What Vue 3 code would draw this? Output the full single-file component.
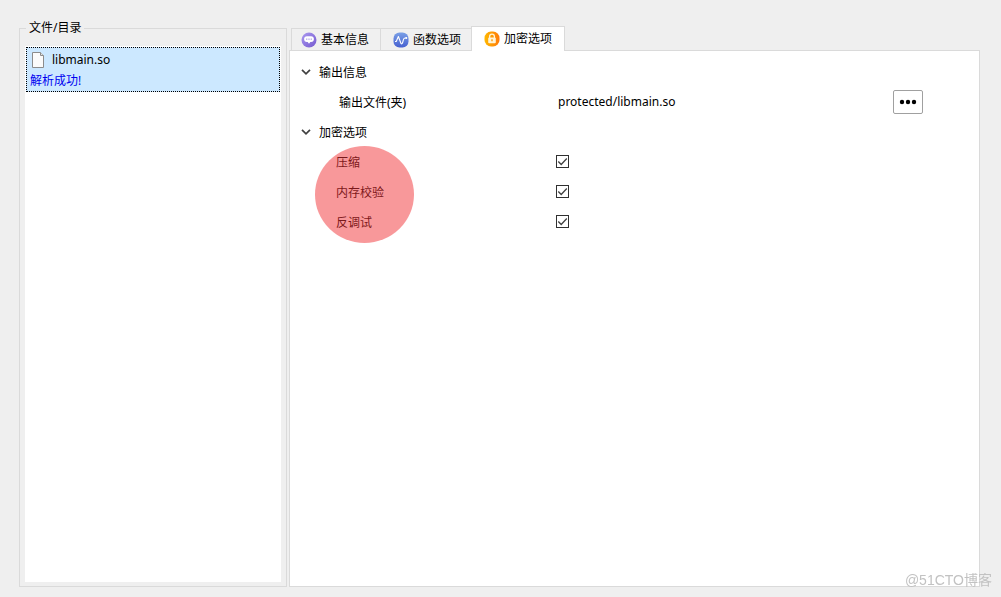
<script setup>
import { ref, reactive } from 'vue'

const activeTab = ref('encrypt')
const tabs = [
  { id: 'basic', label: '基本信息' },
  { id: 'function', label: '函数选项' },
  { id: 'encrypt', label: '加密选项' },
]
const outputFile = ref('protected/libmain.so')
const options = reactive([
  { id: 'compress', label: '压缩', checked: true },
  { id: 'memory', label: '内存校验', checked: true },
  { id: 'debug', label: '反调试', checked: true },
])
</script>

<template>
  <main class="window">
    <fieldset class="files">
      <legend>文件/目录</legend>
      <ul class="file-list">
        <li class="file">
          <div class="file-name">
            <svg class="file-icon" viewBox="0 0 14 18" aria-hidden="true">
              <path d="M1.5 1.5h8l3 3v12h-11z" fill="#fbfbfb" stroke="#8c8c8c" />
              <path d="M9.5 1.5v3h3" fill="#e4e4e4" stroke="#8c8c8c" />
            </svg>
            <span>libmain.so</span>
          </div>
          <div class="file-status">解析成功!</div>
        </li>
      </ul>
    </fieldset>

    <section class="settings">
      <div class="tabs" role="tablist">
        <button
          v-for="tab in tabs"
          :key="tab.id"
          type="button"
          role="tab"
          class="tab"
          :class="{ active: activeTab === tab.id }"
          :aria-selected="activeTab === tab.id"
          @click="activeTab = tab.id"
        >
          <svg v-if="tab.id === 'basic'" class="tab-icon" viewBox="0 0 16 16" aria-hidden="true">
            <defs>
              <linearGradient id="violet" x1="0" y1="0" x2="1" y2="1">
                <stop offset="0" stop-color="#ab9af0" />
                <stop offset="1" stop-color="#7458cf" />
              </linearGradient>
            </defs>
            <circle cx="8" cy="8" r="7.5" fill="url(#violet)" />
            <path d="M6 4.200h4a2.600 2.600 0 0 1 0 5.800H9.300L8 11.800 6.700 10H6a2.600 2.600 0 0 1 0-5.800z" fill="#fff" />
            <circle cx="5.800" cy="7.100" r=".6" fill="#8169d8" />
            <circle cx="8" cy="7.100" r=".6" fill="#8169d8" />
            <circle cx="10.200" cy="7.100" r=".6" fill="#8169d8" />
          </svg>
          <svg v-else-if="tab.id === 'function'" class="tab-icon" viewBox="0 0 16 16" aria-hidden="true">
            <defs>
              <linearGradient id="blue" x1="0" y1="0" x2="0" y2="1">
                <stop offset="0" stop-color="#7ba0e6" />
                <stop offset="1" stop-color="#4660d0" />
              </linearGradient>
            </defs>
            <rect x=".5" y=".5" width="15" height="15" rx="6" fill="url(#blue)" />
            <path
              d="M2 9.500h1.200L5.400 4.500 8 11.500c1 1.200 1.800-1 2.200-3.200.4-1.800 1-2.300 1.800-2.300h1.500"
              fill="none"
              stroke="#fff"
              stroke-width="1.100"
              stroke-linejoin="round"
            />
            <circle cx="13.300" cy="6" r="1" fill="#fff" />
          </svg>
          <svg v-else class="tab-icon" viewBox="0 0 16 16" aria-hidden="true">
            <defs>
              <linearGradient id="amber" x1="0" y1="0" x2="1" y2="0">
                <stop offset="0" stop-color="#ffb800" />
                <stop offset="1" stop-color="#ff7a08" />
              </linearGradient>
            </defs>
            <rect x=".5" y=".5" width="15" height="15" rx="6.500" fill="url(#amber)" />
            <path d="M5.600 7V5.500a2.400 2.400 0 0 1 4.800 0V7" fill="none" stroke="#fff4d8" stroke-width="1.300" />
            <rect x="4.200" y="6.500" width="7.600" height="5.800" rx="1" fill="#fff4d8" />
            <path d="M8 8.300v2" stroke="#ff9a08" stroke-width="1.400" />
          </svg>
          <span>{{ tab.label }}</span>
        </button>
      </div>

      <div class="panel" role="tabpanel">
        <h2 class="group">
          <svg class="chevron" viewBox="0 0 10 6" aria-hidden="true">
            <path d="M1 .8l4 4 4-4" fill="none" stroke="#404040" stroke-width="1.700" />
          </svg>
          <span class="text">输出信息</span>
        </h2>
        <div class="row output">
          <span class="name text">输出文件(夹)</span>
          <span class="value">{{ outputFile }}</span>
          <button type="button" class="browse" aria-label="浏览">
            <svg viewBox="0 0 18 6" aria-hidden="true">
              <circle cx="3" cy="3" r="2.200" />
              <circle cx="9" cy="3" r="2.200" />
              <circle cx="15" cy="3" r="2.200" />
            </svg>
          </button>
        </div>
        <h2 class="group">
          <svg class="chevron" viewBox="0 0 10 6" aria-hidden="true">
            <path d="M1 .8l4 4 4-4" fill="none" stroke="#404040" stroke-width="1.700" />
          </svg>
          <span class="text">加密选项</span>
        </h2>
        <div class="options">
          <div v-for="option in options" :key="option.id" class="row">
            <label class="name text" :for="option.id">{{ option.label }}</label>
            <span class="check">
              <input :id="option.id" v-model="option.checked" type="checkbox" />
              <svg v-if="option.checked" viewBox="0 0 13 13" aria-hidden="true">
                <path d="M2.300 6.500l2.900 3 5.600-6" fill="none" stroke="#404040" stroke-width="1.300" />
              </svg>
            </span>
          </div>
          <div class="highlight"></div>
        </div>
      </div>
    </section>
    <div class="watermark">@51CTO博客</div>
  </main>
</template>

<style>
body {
  margin: 0;
  background: #efefef;
}
</style>

<style scoped>
.window {
  box-sizing: border-box;
  min-height: 100vh;
  padding: 20px 21px 10px 19px;
  display: grid;
  grid-template-columns: 268px minmax(0, 1fr);
  gap: 2px;
  background: #efefef;
  color: #000;
  font: 12px/16px "Noto Sans", "Noto Sans CJK SC", sans-serif;
}
.files {
  display: flex;
  min-width: 0;
  margin: 0;
  padding: 10px 5px 4px;
  border: 1px solid #dadada;
}
legend {
  margin-left: 1px;
  padding: 0 3px;
}
.file-list {
  flex: 1;
  margin: 0;
  padding: 1px;
  list-style: none;
  background: #fff;
}
.file {
  padding: 2px 3px;
  border: 1px dotted #000;
  background: #cce8ff;
}
.file-name {
  display: flex;
  align-items: center;
  gap: 7px;
  height: 20px;
}
.file-icon {
  width: 14px;
  height: 18px;
  margin-left: 1px;
}
.file-status {
  height: 19px;
  line-height: 22px;
  color: #0000f0;
}
.settings {
  display: flex;
  flex-direction: column;
  padding-top: 6px;
}
.tabs {
  display: flex;
  align-items: flex-end;
  padding-left: 2px;
}
.tab {
  display: flex;
  align-items: center;
  gap: 4px;
  height: 22px;
  padding: 0 10px 0 12px;
  border: 1px solid #dadada;
  border-width: 1px 1px 0 0;
  background: #f0f0f0;
  color: inherit;
  font: inherit;
}
.tab:first-child {
  padding: 0 11px 0 9px;
  border-left-width: 1px;
}
.tab.active {
  z-index: 1;
  height: 25px;
  margin: 0 0 -1px -1px;
  padding: 0 12px;
  border-left-width: 1px;
  background: #fff;
}
.tab-icon {
  width: 16px;
  height: 16px;
}
.panel {
  flex: 1;
  padding: 6px 56px 6px 0;
  border: 1px solid #dadada;
  background: #fff;
}
.group {
  display: flex;
  align-items: center;
  gap: 8px;
  height: 30px;
  margin: 0;
  padding-left: 11px;
  font: inherit;
}
.text {
  padding-top: 2px;
}
.chevron {
  width: 10px;
  height: 6px;
}
.row {
  display: grid;
  grid-template-columns: 220px 1fr auto;
  align-items: center;
  height: 30px;
  padding-left: 46px;
}
.output {
  grid-template-columns: 219px 1fr auto;
  padding-left: 49px;
}
.browse {
  display: grid;
  place-items: center;
  width: 30px;
  height: 24px;
  padding: 0;
  border: 1px solid #a0a0a0;
  border-radius: 2px;
  background: #fff;
}
.browse svg {
  width: 18px;
  height: 6px;
}
.options {
  position: relative;
}
.check {
  display: grid;
  width: 13px;
  height: 14px;
}
.check input,
.check svg {
  grid-area: 1 / 1;
  width: 13px;
  height: 13px;
}
.check input {
  box-sizing: border-box;
  margin: 0;
  appearance: none;
  border: 1px solid #303030;
  background: #fff;
}
.check svg {
  pointer-events: none;
}
.highlight {
  position: absolute;
  top: -1px;
  left: 25px;
  width: 99px;
  height: 97px;
  border-radius: 50%;
  background: rgba(242, 50, 54, 0.5);
  pointer-events: none;
}
.watermark {
  position: fixed;
  right: 9px;
  bottom: 8px;
  color: #c2c2c2;
  font: 14px/18px "Liberation Sans", "Noto Sans CJK SC", sans-serif;
}
</style>
